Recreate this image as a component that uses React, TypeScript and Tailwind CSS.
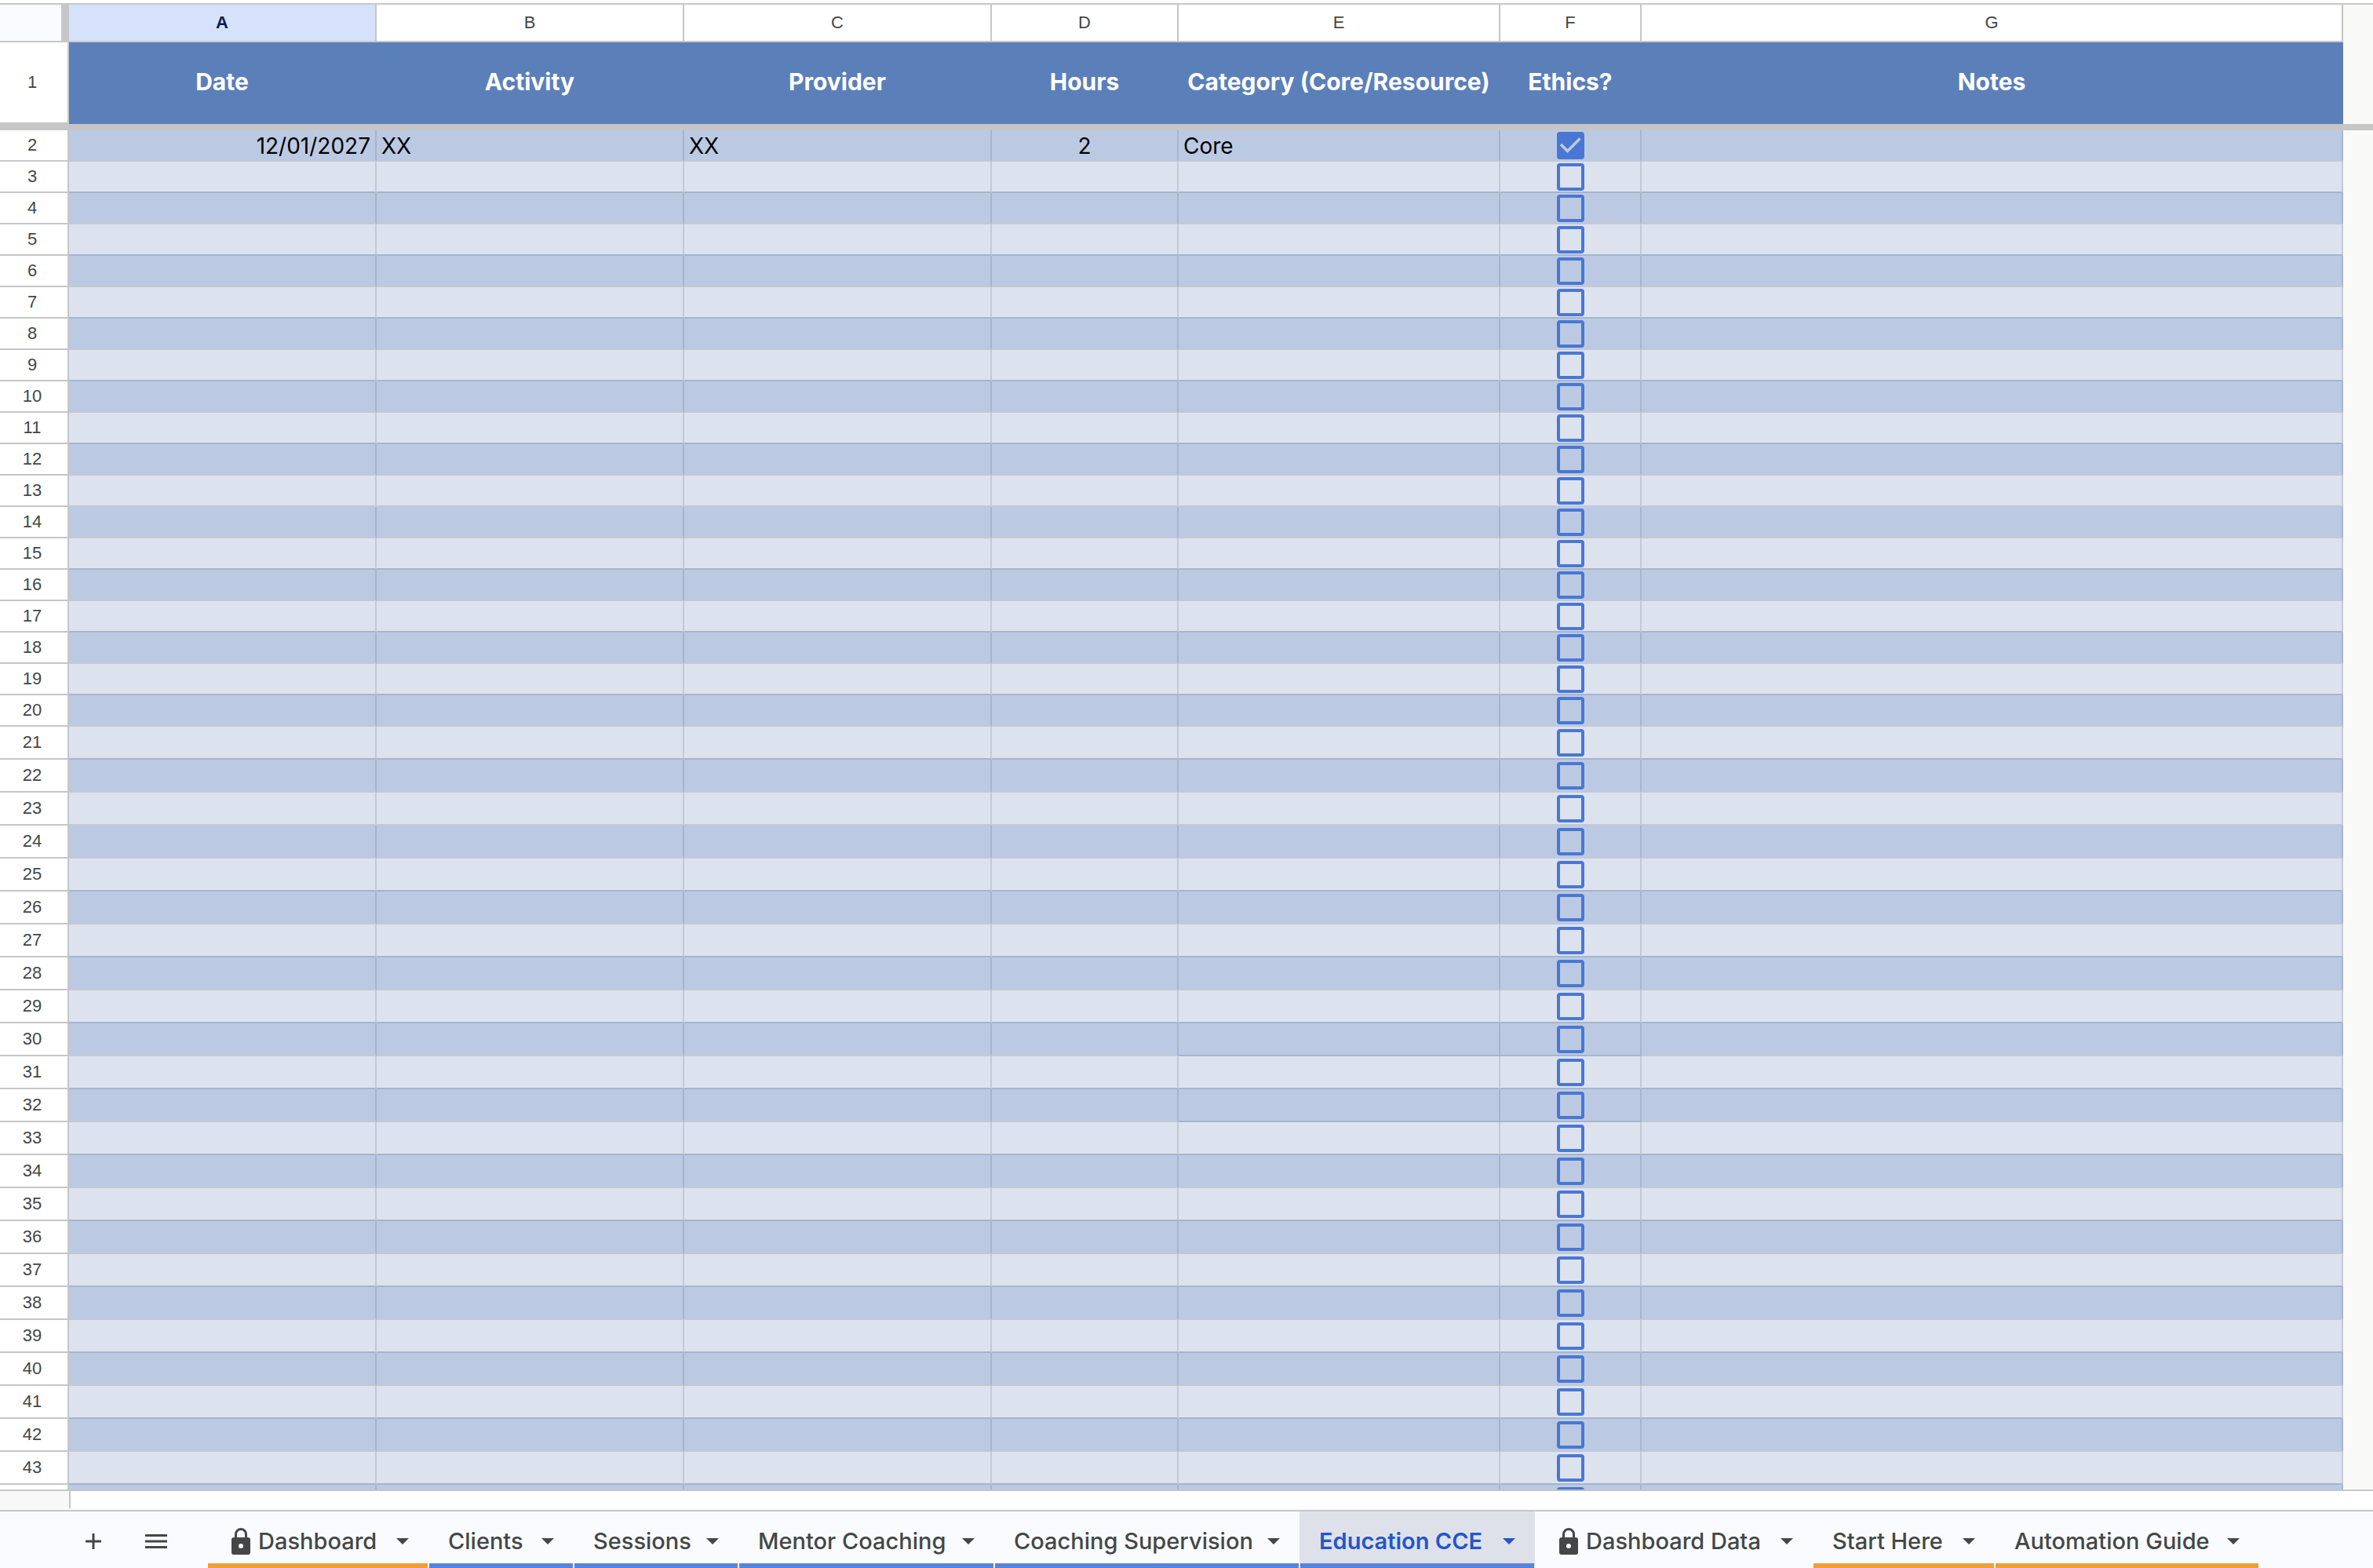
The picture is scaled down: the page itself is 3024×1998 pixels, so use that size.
import clsx from 'clsx';

interface Entry {
  date?: string;
  activity?: string;
  provider?: string;
  hours?: string;
  category?: string;
  ethics?: boolean;
}

interface Sheet {
  name: string;
  width: string;
  bar: string;
  locked?: boolean;
  active?: boolean;
}

const columns = [
  { letter: 'A', title: 'Date' },
  { letter: 'B', title: 'Activity' },
  { letter: 'C', title: 'Provider' },
  { letter: 'D', title: 'Hours' },
  { letter: 'E', title: 'Category (Core/Resource)' },
  { letter: 'F', title: 'Ethics?' },
  { letter: 'G', title: 'Notes' },
];

const entries: Record<number, Entry> = {
  2: { date: '12/01/2027', activity: 'XX', provider: 'XX', hours: '2', category: 'Core', ethics: true },
};

const rowNumbers = Array.from({ length: 43 }, (_, i) => i + 2);
const lastRow = rowNumbers[rowNumbers.length - 1];

const sheets: Sheet[] = [
  { name: 'Dashboard', width: 'w-[282px]', bar: 'bg-[#f29d38]', locked: true },
  { name: 'Clients', width: 'w-[185px]', bar: 'bg-[#5783e0]' },
  { name: 'Sessions', width: 'w-[210px]', bar: 'bg-[#5783e0]' },
  { name: 'Mentor Coaching', width: 'w-[326px]', bar: 'bg-[#5783e0]' },
  { name: 'Coaching Supervision', width: 'w-[389px]', bar: 'bg-[#5783e0]' },
  { name: 'Education CCE', width: 'w-[300px]', bar: 'bg-[#5783e0]', active: true },
  { name: 'Dashboard Data', width: 'w-[354px]', bar: 'bg-transparent', locked: true },
  { name: 'Start Here', width: 'w-[232px]', bar: 'bg-[#f29d38]' },
  { name: 'Automation Guide', width: 'w-[337px]', bar: 'bg-[#f29d38]' },
];

function LockIcon() {
  return (
    <svg className="w-6 h-[34px] shrink-0" viewBox="0 0 24 34" fill="none">
      <path d="M5.5 13V8a6.5 6.5 0 0 1 13 0v5" stroke="currentColor" strokeWidth="3" />
      <path
        fillRule="evenodd"
        fill="currentColor"
        d="M3 12h18a3 3 0 0 1 3 3v16a3 3 0 0 1-3 3H3a3 3 0 0 1-3-3V15a3 3 0 0 1 3-3zm9 8a3 3 0 1 0 0 6 3 3 0 0 0 0-6z"
      />
    </svg>
  );
}

function EthicsBox({ row, checked }: { row: number; checked?: boolean }) {
  return (
    <div className="grid place-items-center">
      <input
        type="checkbox"
        aria-label={`Ethics, row ${row}`}
        defaultChecked={checked}
        className="peer col-start-1 row-start-1 appearance-none size-[35px] border-4 border-[#4a77d4] rounded-[4px] checked:bg-[#4a77d4]"
      />
      <svg
        className="col-start-1 row-start-1 size-[35px] pointer-events-none invisible peer-checked:visible"
        viewBox="0 0 35 35"
        fill="none"
      >
        <path d="M5 16l8.5 8.5L29.5 8.5" stroke="#bccae2" strokeWidth="3.5" />
      </svg>
    </div>
  );
}

function SheetRow({ row }: { row: number }) {
  const entry = entries[row] ?? {};
  const dark = row % 2 === 0;
  // Rows 13 and 23 carry the pale rule, and E:F under 30 and 32 carry the strong one
  const strongRule = !dark && row !== 13 && row !== 23;
  const strongInner = row === 30 || row === 32;
  const cell = clsx(
    'p-0 border-r-2 border-b-2',
    dark ? 'bg-[#bbcae2] border-r-[#a6b5cb]' : 'bg-[#dde3ee] border-r-[#c3c9d5]',
  );
  const text = 'px-[6px] pt-[2px] leading-9 whitespace-nowrap';
  const rule = strongRule ? 'border-b-[#a6b5cb]' : 'border-b-[#c3c9d5]';
  const innerRule = strongInner ? 'border-b-[#a6b5cb]' : rule;

  return (
    <tr className={row > 20 ? 'h-[42px]' : 'h-10'}>
      <th
        scope="row"
        aria-label={`Row ${row}`}
        className="p-0 pr-1 bg-white border-r-2 border-b-2 border-[#c6c6c6] text-[22px] leading-6 font-normal text-[#444746]"
      >
        {row < lastRow && row}
      </th>
      <td className={clsx(cell, rule)}>
        <div className={clsx(text, 'text-right')}>{entry.date}</div>
      </td>
      <td className={clsx(cell, rule)}>
        <div className={text}>{entry.activity}</div>
      </td>
      <td className={clsx(cell, rule)}>
        <div className={text}>{entry.provider}</div>
      </td>
      <td className={clsx(cell, rule)}>
        <div className={clsx(text, 'text-center')}>{entry.hours}</div>
      </td>
      <td className={clsx(cell, innerRule)}>
        <div className={text}>{entry.category}</div>
      </td>
      <td className={clsx(cell, innerRule)}>
        <EthicsBox row={row} checked={entry.ethics} />
      </td>
      <td className={clsx(cell, rule)} />
      <td className="p-0" />
    </tr>
  );
}

function Grid() {
  return (
    <table className="w-full table-fixed border-separate border-spacing-0 text-[28px] text-black font-['Inter',sans-serif]">
      <colgroup>
        <col className="w-[88px]" />
        <col className="w-[392px]" />
        <col className="w-[392px]" />
        <col className="w-[392px]" />
        <col className="w-[238px]" />
        <col className="w-[410px]" />
        <col className="w-[180px]" />
        <col />
        <col className="w-[38px]" />
      </colgroup>
      <thead className="[&_th]:p-0">
        <tr className="h-12 font-['Liberation_Sans',Arial,sans-serif] text-[22px] leading-6 text-[#444746]">
          <td className="bg-[#f8fafd] border-r-[10px] border-b-2 border-[#c6c6c6]" />
          {columns.map((col, i) => (
            <th
              key={col.letter}
              scope="col"
              className={clsx(
                'border-r-2 border-b-2 border-[#c6c6c6]',
                i === 0 ? 'bg-[#d6e2fc] font-bold text-[#041e49]' : 'bg-white font-normal',
              )}
            >
              {col.letter}
            </th>
          ))}
          <td />
        </tr>
        <tr className="h-[104px]">
          <th
            scope="row"
            className="bg-white border-r-2 border-b-2 border-[#c6c6c6] font-['Liberation_Sans',Arial,sans-serif] text-[22px] leading-6 font-normal text-[#444746]"
          >
            <span className="pr-1">1</span>
          </th>
          {columns.map((col) => (
            <th
              key={col.letter}
              scope="col"
              className="bg-[#5b7fb9] border-r-2 border-[#5b7fb9] font-bold text-[30px] text-white whitespace-nowrap leading-10"
            >
              <div className="pb-1">{col.title}</div>
            </th>
          ))}
          <td />
        </tr>
        <tr className="h-2">
          <td colSpan={9} className="p-0 bg-[#c6c6c6]" />
        </tr>
      </thead>
      <tbody className="[&_th]:font-['Liberation_Sans',Arial,sans-serif]">
        {rowNumbers.map((row) => (
          <SheetRow key={row} row={row} />
        ))}
      </tbody>
    </table>
  );
}

function SheetTab({ sheet }: { sheet: Sheet }) {
  return (
    <button
      className={clsx(
        'flex flex-col px-px h-full shrink-0',
        sheet.width,
        sheet.active ? 'bg-[#dee1e9] text-[#2456c9] font-semibold' : 'text-[#444746] font-medium',
      )}
    >
      <span className={clsx('flex flex-1 w-full items-center justify-between pt-[10px] pr-6', sheet.locked ? 'pl-[30px]' : 'pl-6')}>
        <span className="flex items-center gap-[10px] whitespace-nowrap">
          {sheet.locked && <LockIcon />}
          {sheet.name}
        </span>
        <svg className="w-4 h-2 shrink-0" viewBox="0 0 16 8">
          <path d="M0 0h16L8 8z" fill="currentColor" />
        </svg>
      </span>
      <span className={clsx('h-[6px] w-full', sheet.bar)} />
    </button>
  );
}

export default function App() {
  return (
    <div className="flex flex-col h-screen overflow-hidden bg-white">
      <main className="flex-1 min-h-0 overflow-hidden mt-1 border-t-2 border-[#c6c6c6] bg-[#f9f9f8]">
        <Grid />
      </main>

      {/* Horizontal scroll strip */}
      <div className="flex h-6 shrink-0 border-t-2 border-[#c6c6c6]">
        <div className="w-[90px] bg-[#f8f8f8] border-r-2 border-[#c6c6c6]" />
        <div className="flex-1 bg-white" />
      </div>

      {/* Sheet tabs */}
      <footer className="shrink-0 border-t-2 border-[#f9fbff]">
        <nav className="flex h-[74px] border-t-2 border-[#c6c6c6] bg-[#f9fbff] text-[29px] leading-9 font-['Inter',sans-serif] text-[#444746]">
          <div className="flex w-[264px] shrink-0 items-center gap-14 pt-1 pl-[109px]">
            <button aria-label="Add sheet">
              <svg className="w-5 h-5" viewBox="0 0 20 20" fill="none">
                <path d="M10 0v20M0 10h20" stroke="currentColor" strokeWidth="3" />
              </svg>
            </button>
            <button aria-label="All sheets">
              <svg className="w-7 h-[18px]" viewBox="0 0 28 18" fill="none">
                <path d="M0 1.5h28M0 9h28M0 16.5h28" stroke="currentColor" strokeWidth="3" />
              </svg>
            </button>
          </div>
          {sheets.map((sheet) => (
            <SheetTab key={sheet.name} sheet={sheet} />
          ))}
        </nav>
      </footer>
    </div>
  );
}
